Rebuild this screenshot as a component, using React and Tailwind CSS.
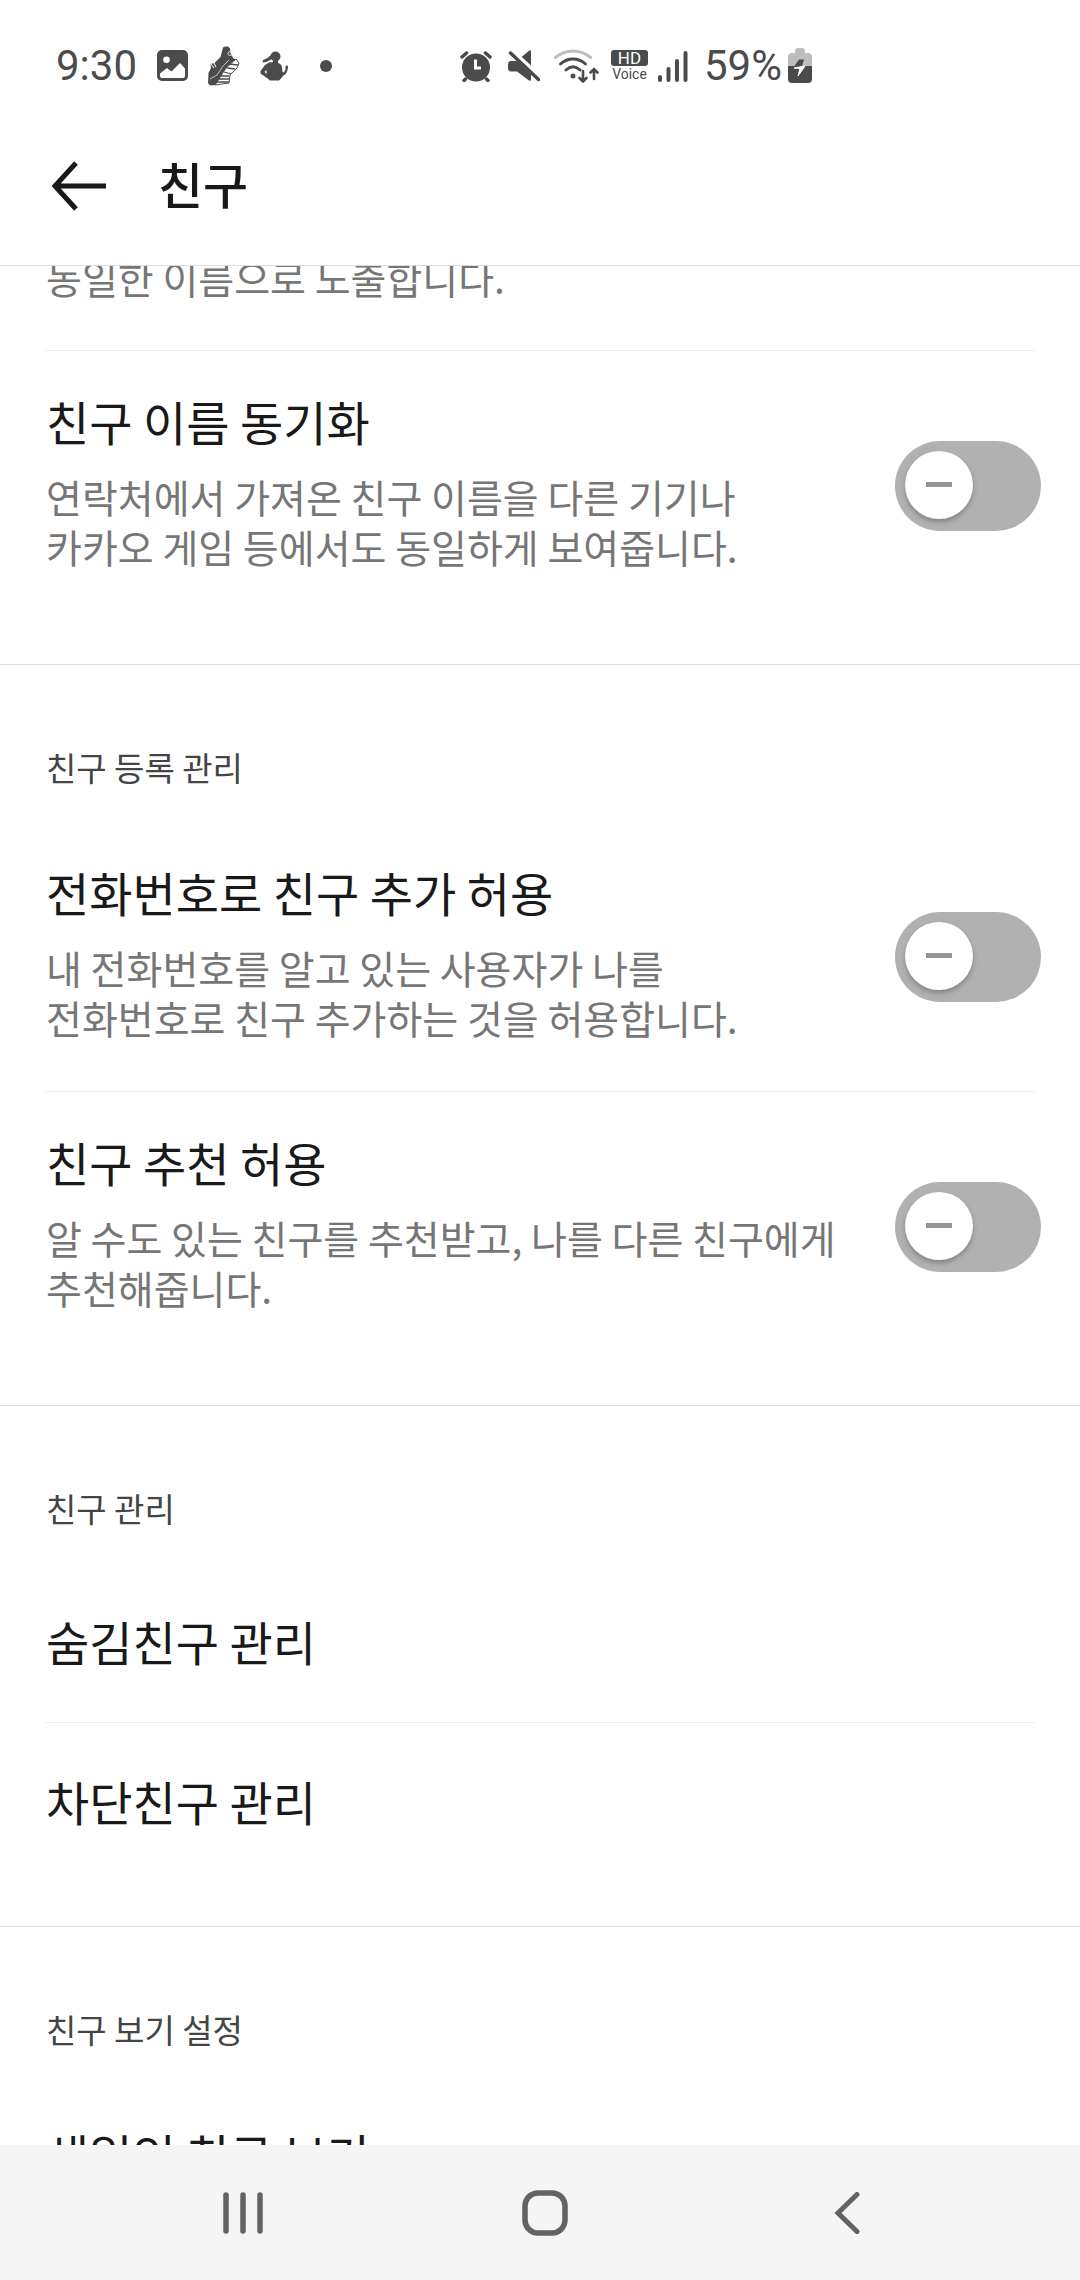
import { useState } from "react";

const syncItems = [
  {
    id: "name-sync",
    title: "친구 이름 동기화",
    lines: ["연락처에서 가져온 친구 이름을 다른 기기나", "카카오 게임 등에서도 동일하게 보여줍니다."]
  }
];

const registerItems = [
  {
    id: "phone-add",
    title: "전화번호로 친구 추가 허용",
    lines: ["내 전화번호를 알고 있는 사용자가 나를", "전화번호로 친구 추가하는 것을 허용합니다."]
  },
  {
    id: "recommend",
    title: "친구 추천 허용",
    lines: ["알 수도 있는 친구를 추천받고, 나를 다른 친구에게", "추천해줍니다."]
  }
];

const viewItems = [{ id: "birthday", title: "생일인 친구 보기", lines: [] }];

function StatusBar() {
  return (
    <div className="h-[131px] shrink-0 flex items-center pl-14 font-['Roboto',sans-serif] text-[42px] leading-[48px] text-[#4b4b4b]">
      <span>9:30</span>

      {/* Notification icons */}
      <div className="flex items-center gap-5 ml-5">
        <svg className="w-[31px] h-[31px]" viewBox="0 0 31 31" fill="currentColor">
          <path fillRule="evenodd" d="M5 0h21a5 5 0 0 1 5 5v21a5 5 0 0 1-5 5H5a5 5 0 0 1-5-5V5a5 5 0 0 1 5-5Zm4.500 6.500a3.300 3.300 0 1 0 0 6.600 3.300 3.300 0 0 0 0-6.600ZM3 23.500V26a2 2 0 0 0 2 2h21a2 2 0 0 0 2-2v-7.500L23 13l-8.500 8.500-4.500-3.500Z" />
        </svg>
        <svg className="w-8 h-10" viewBox="0 0 32 40" fill="none">
          <path d="M28 13 31 17l-2 5-7 7-1 8-14 2 2-6 9-11Z" fill="#fff" stroke="currentColor" />
          <path d="m21 18 9 1M19 22l8 1M16 26l7 2M13 30h8M11 33h10M9 36h12" stroke="currentColor" strokeWidth="1.300" />
          <path d="M15 1.500 17 .500h3l2 2 .500 5 3 5 3.500 1Q22 16 17 24L9 37l-2 2-5 .500L0 37l.500-10L3 22l-.500-4 4-1 6-6Z" fill="currentColor" />
          <path d="M2 33 9 29l6-9 6-6" stroke="#c4c4c4" strokeWidth="1" />
          <path d="m3 18 3 4M6 17l2 4" stroke="#fff" strokeWidth="1" />
          <circle cx="22" cy="7.500" r="2" stroke="#ddd" strokeWidth="1" />
        </svg>
        <svg className="w-7 h-[30px]" viewBox="0 0 28 30" fill="currentColor">
          <circle cx="15.500" cy="5.500" r="5" />
          <path d="M11 4 7.500 7 3 9 2.500 11.500l4-.500L12 8ZM13 9h5v3q4 1 4 5l.500 4 1.500.500 1.500-3v-3c1-2 3-1 2.500 1-.500 4-2 7-4.500 8l-2.500 3L19 29.500h-9L7 27 .500 22.500V20L5 14l4-2.500 4-.500Z" />
          <path d="m4.500 21 2-2v4Z" fill="#fff" />
        </svg>
        <span className="w-3 h-3 ml-3 rounded-full bg-[#4b4b4b]" />
      </div>

      {/* System icons */}
      <div className="flex items-center gap-3 ml-32">
        <svg className="w-8 h-8" viewBox="0 0 32 32" fill="none" stroke="currentColor" strokeLinecap="round">
          <circle cx="16" cy="17.500" r="14" fill="currentColor" stroke="none" />
          <path d="M2 7 6.500 3M30 7l-4.500-4M5.500 29 4 30.500M26.500 29l1.500 1.500" strokeWidth="3.500" />
          <path d="M15.500 9.500v8.500H21" stroke="#fff" strokeWidth="3" strokeLinecap="butt" />
        </svg>
        <svg className="w-8 h-8 ml-1" viewBox="0 0 32 32" fill="currentColor">
          <path d="M0 14.500Q0 11 3 11h6l14 13v5.500q0 2-2 1L9 21.500H3Q0 21.500 0 18ZM13.500 7 21 .800q2-1.300 2 .700v14Z" />
          <path d="M7 2.500 29 24" stroke="#fff" strokeWidth="3" />
          <path d="m2.500 3 28 26.500" stroke="currentColor" strokeWidth="3.500" strokeLinecap="round" />
        </svg>
        <svg className="w-[45px] h-[34px] ml-0.5" viewBox="0 0 45 34" fill="none" stroke="currentColor" strokeWidth="3" strokeLinecap="round">
          <path d="M1.500 8.500Q9 2 19 2t17.500 6.500" stroke="#bdbdbd" />
          <path d="M6.500 15Q12 10 19 10t12.500 5M12 21q7-6.500 14 0" />
          <circle cx="19" cy="27" r="2.500" fill="currentColor" stroke="none" />
          <path d="M29 22v10M25.500 29l3.500 3.500 3.500-3.500M40 30V20M36.500 23.500 40 20l3.500 3.500" strokeWidth="2.600" />
        </svg>
        <span className="flex flex-col items-center">
          <span className="w-[37px] h-4 rounded-[3px] bg-[#4b4b4b] text-white text-[17px] leading-4 text-center">HD</span>
          <span className="text-[14px] leading-4">Voice</span>
        </span>
        <svg className="w-[30px] h-8 -ml-0.5" viewBox="0 0 30 32" stroke="currentColor" strokeWidth="4" strokeLinecap="round">
          <path d="M2 27v3M10.500 19v11M19 11v19M27.500 3v27" />
        </svg>
        <span className="flex items-center gap-1.5 ml-1">
          <span>59%</span>
          <svg className="w-6 h-[35px]" viewBox="0 0 24 35">
            <path d="M7 3q0-3 3-3h4q3 0 3 3v2h3q4 0 4 4v9H0V9q0-4 4-4h3Z" fill="#bdbdbd" />
            <path d="M0 18h24v13q0 4-4 4H4q-4 0-4-4Z" fill="currentColor" />
            <path d="M11 11.500h5L14 18l-3 3-6-1Z" fill="currentColor" />
            <path d="m6 20 11-2-7 10 2-7.500Z" fill="#fff" stroke="#fff" />
          </svg>
        </span>
      </div>
    </div>
  );
}

function Toggle({ id }) {
  const [on, setOn] = useState(false);

  return (
    <span className="relative shrink-0 self-center w-[146px] h-[90px]">
      <input
        id={id}
        type="checkbox"
        role="switch"
        checked={on}
        onChange={e => setOn(e.target.checked)}
        className="peer appearance-none block w-full h-full rounded-full bg-[#b1b1b1] checked:bg-[#fee500] cursor-pointer"
      />
      <span className="absolute left-2.5 top-2.5 w-[68px] h-[68px] rounded-full bg-white shadow-[0_3px_5px_rgba(0,0,0,0.25)] flex items-center justify-center pointer-events-none peer-checked:translate-x-[58px]">
        <span className="w-[26px] h-[5px] bg-[#959595]" />
      </span>
    </span>
  );
}

function ToggleRow({ item }) {
  return (
    <div className="h-[269px] pl-[46px] pr-[39px] flex items-start justify-between">
      <div className="pt-[42px]">
        <label htmlFor={item.id} className="block text-[47px] leading-[56px] text-[#191919]">
          {item.title}
        </label>
        <p className="mt-[22px] text-[39px] leading-[50px] text-[#767676]">
          {item.lines.map(line => (
            <span key={line} className="block">{line}</span>
          ))}
        </p>
      </div>
      <Toggle id={item.id} />
    </div>
  );
}

function LinkRow({ children }) {
  return (
    <a href="#" className="h-[159px] px-[46px] pb-1 flex items-center text-[47px] leading-[56px] text-[#191919]">
      {children}
    </a>
  );
}

function Divider() {
  return <hr className="mx-[45px] border-t border-[#efefef]" />;
}

function SectionTitle({ children }) {
  return (
    <h2 className="h-[157px] px-[46px] pt-[78px] text-[33px] leading-[48px] text-[#444]">
      {children}
    </h2>
  );
}

export default function App() {
  return (
    <div className="h-dvh flex flex-col overflow-hidden bg-white font-['Noto_Sans_CJK_KR',sans-serif]">
      <StatusBar />

      {/* Header */}
      <header className="h-[135px] pb-6 shrink-0 flex items-center pl-[51px] border-b border-[#dcdcdc] text-[#191919]">
        <button aria-label="뒤로">
          <svg className="w-14 h-14" viewBox="0 0 56 56" fill="none" stroke="currentColor" strokeWidth="5">
            <path d="M25 5 4 28l21 23M4 28h51" />
          </svg>
        </button>
        <h1 className="ml-[51px] pb-1.5 text-[49px] leading-[68px] font-medium">친구</h1>
      </header>

      {/* Settings list */}
      <main className="flex-1 min-h-0 overflow-hidden">
        <section className="pb-11 border-b border-[#dcdcdc]">
          <p className="-mt-3.5 px-[46px] pb-12 text-[39px] leading-[50px] text-[#767676]">
            동일한 이름으로 노출합니다.
          </p>
          <Divider />
          {syncItems.map(item => (
            <ToggleRow key={item.id} item={item} />
          ))}
        </section>

        <section className="pb-11 border-b border-[#dcdcdc]">
          <SectionTitle>친구 등록 관리</SectionTitle>
          <ToggleRow item={registerItems[0]} />
          <Divider />
          <ToggleRow item={registerItems[1]} />
        </section>

        <section className="pb-11 border-b border-[#dcdcdc]">
          <SectionTitle>친구 관리</SectionTitle>
          <LinkRow>숨김친구 관리</LinkRow>
          <Divider />
          <LinkRow>차단친구 관리</LinkRow>
        </section>

        <section>
          <SectionTitle>친구 보기 설정</SectionTitle>
          {viewItems.map(item => (
            <ToggleRow key={item.id} item={item} />
          ))}
        </section>
      </main>

      {/* Navigation bar */}
      <nav className="h-[135px] shrink-0 flex pl-[92px] pr-[82px] bg-[#f5f5f5] text-[#636363]">
        <button aria-label="최근 앱" className="flex-1 flex items-center justify-center">
          <svg className="w-10 h-[42px]" viewBox="0 0 40 42" stroke="currentColor" strokeWidth="5.500" strokeLinecap="round">
            <path d="M3 3v36M20 3v36M37 3v36" />
          </svg>
        </button>
        <button aria-label="홈" className="flex-1 flex items-center justify-center">
          <svg className="w-[46px] h-[46px]" viewBox="0 0 46 46" fill="none" stroke="currentColor" strokeWidth="5.500">
            <rect x="3" y="3" width="40" height="40" rx="13" />
          </svg>
        </button>
        <button aria-label="뒤로 가기" className="flex-1 flex items-center justify-center">
          <svg className="w-[26px] h-[42px]" viewBox="0 0 26 42" fill="none" stroke="currentColor" strokeWidth="5" strokeLinecap="round">
            <path d="M23 2.500 4 21l19 18.500" />
          </svg>
        </button>
      </nav>
    </div>
  );
}
